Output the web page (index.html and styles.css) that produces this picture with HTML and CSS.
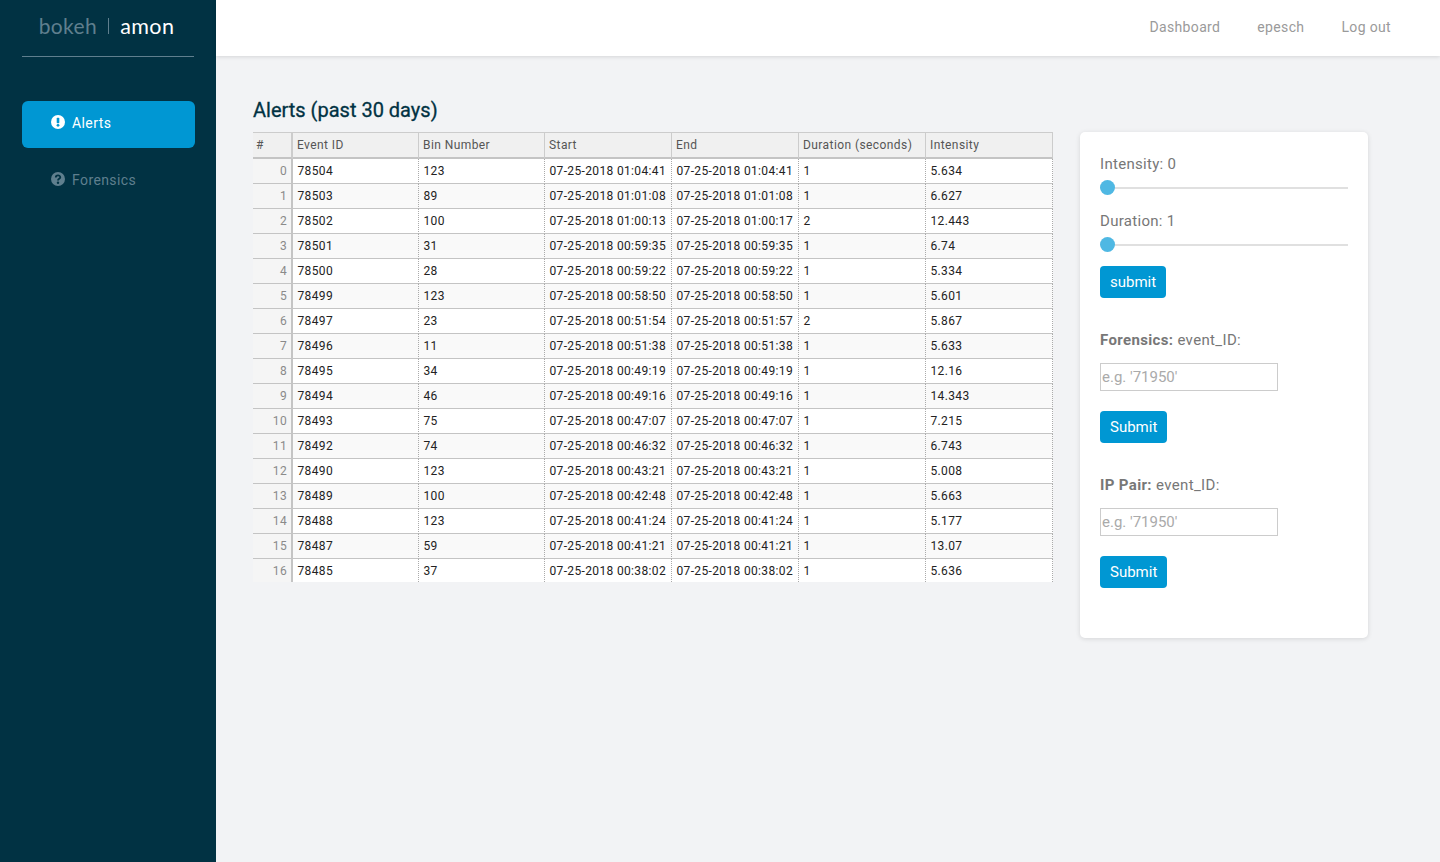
FILE: index.html
```html
<!DOCTYPE html>
<html lang="en">
<head>
    <meta charset="UTF-8">
    <title>amon</title>
    <link rel="stylesheet" href="styles.css">
</head>
<body>
    <div class="sidebar">
        <div class="logo"><span class="logo-dim">bokeh</span><span class="logo-sep"></span><span class="logo-name">amon</span></div>
        <ul class="nav">
            <li class="nav-item active">
                <svg class="nav-icon" viewBox="0 0 14 14"><circle cx="7" cy="7" r="7" fill="#fff"/><rect x="5.7" y="2.8" width="2.6" height="5.4" rx="0.8" fill="#0097d3"/><circle cx="7" cy="10.3" r="1.4" fill="#0097d3"/></svg>
                Alerts
            </li>
            <li class="nav-item">
                <svg class="nav-icon" viewBox="0 0 14 14"><circle cx="7" cy="7" r="7" fill="#5f7f8e"/><path d="M4.8 5.4 C4.8 2.8 9.3 2.8 9.3 5.3 C9.3 6.9 7 6.8 7 8.4" fill="none" stroke="#013243" stroke-width="1.8"/><circle cx="7" cy="10.7" r="1.2" fill="#013243"/></svg>
                Forensics
            </li>
        </ul>
    </div>
    <div class="page">
        <div class="topbar">
            <a class="top-link">Dashboard</a>
            <a class="top-link">epesch</a>
            <a class="top-link">Log out</a>
        </div>
        <div class="content">
            <div class="main">
                <h1>Alerts (past 30 days)</h1>
                <table class="grid">
                    <colgroup>
                        <col class="c-index"><col class="c-id"><col class="c-bin"><col class="c-start"><col class="c-end"><col class="c-dur"><col class="c-int">
                    </colgroup>
                    <thead>
                        <tr><th>#</th><th>Event ID</th><th>Bin Number</th><th>Start</th><th>End</th><th>Duration (seconds)</th><th>Intensity</th></tr>
                    </thead>
                    <tbody>
                        <tr><td class="idx">0</td><td>78504</td><td>123</td><td>07-25-2018 01:04:41</td><td>07-25-2018 01:04:41</td><td>1</td><td>5.634</td></tr>
                        <tr><td class="idx">1</td><td>78503</td><td>89</td><td>07-25-2018 01:01:08</td><td>07-25-2018 01:01:08</td><td>1</td><td>6.627</td></tr>
                        <tr><td class="idx">2</td><td>78502</td><td>100</td><td>07-25-2018 01:00:13</td><td>07-25-2018 01:00:17</td><td>2</td><td>12.443</td></tr>
                        <tr><td class="idx">3</td><td>78501</td><td>31</td><td>07-25-2018 00:59:35</td><td>07-25-2018 00:59:35</td><td>1</td><td>6.74</td></tr>
                        <tr><td class="idx">4</td><td>78500</td><td>28</td><td>07-25-2018 00:59:22</td><td>07-25-2018 00:59:22</td><td>1</td><td>5.334</td></tr>
                        <tr><td class="idx">5</td><td>78499</td><td>123</td><td>07-25-2018 00:58:50</td><td>07-25-2018 00:58:50</td><td>1</td><td>5.601</td></tr>
                        <tr><td class="idx">6</td><td>78497</td><td>23</td><td>07-25-2018 00:51:54</td><td>07-25-2018 00:51:57</td><td>2</td><td>5.867</td></tr>
                        <tr><td class="idx">7</td><td>78496</td><td>11</td><td>07-25-2018 00:51:38</td><td>07-25-2018 00:51:38</td><td>1</td><td>5.633</td></tr>
                        <tr><td class="idx">8</td><td>78495</td><td>34</td><td>07-25-2018 00:49:19</td><td>07-25-2018 00:49:19</td><td>1</td><td>12.16</td></tr>
                        <tr><td class="idx">9</td><td>78494</td><td>46</td><td>07-25-2018 00:49:16</td><td>07-25-2018 00:49:16</td><td>1</td><td>14.343</td></tr>
                        <tr><td class="idx">10</td><td>78493</td><td>75</td><td>07-25-2018 00:47:07</td><td>07-25-2018 00:47:07</td><td>1</td><td>7.215</td></tr>
                        <tr><td class="idx">11</td><td>78492</td><td>74</td><td>07-25-2018 00:46:32</td><td>07-25-2018 00:46:32</td><td>1</td><td>6.743</td></tr>
                        <tr><td class="idx">12</td><td>78490</td><td>123</td><td>07-25-2018 00:43:21</td><td>07-25-2018 00:43:21</td><td>1</td><td>5.008</td></tr>
                        <tr><td class="idx">13</td><td>78489</td><td>100</td><td>07-25-2018 00:42:48</td><td>07-25-2018 00:42:48</td><td>1</td><td>5.663</td></tr>
                        <tr><td class="idx">14</td><td>78488</td><td>123</td><td>07-25-2018 00:41:24</td><td>07-25-2018 00:41:24</td><td>1</td><td>5.177</td></tr>
                        <tr><td class="idx">15</td><td>78487</td><td>59</td><td>07-25-2018 00:41:21</td><td>07-25-2018 00:41:21</td><td>1</td><td>13.07</td></tr>
                        <tr><td class="idx">16</td><td>78485</td><td>37</td><td>07-25-2018 00:38:02</td><td>07-25-2018 00:38:02</td><td>1</td><td>5.636</td></tr>
                    </tbody>
                </table>
            </div>
            <div class="card">
                <div class="slider-label">Intensity: 0</div>
                <input class="slider" type="range" min="0" max="20" value="0">
                <div class="slider-label second">Duration: 1</div>
                <input class="slider" type="range" min="1" max="20" value="1">
                <button class="btn btn-first">submit</button>
                <div class="field-label"><b>Forensics:</b> event_ID:</div>
                <input class="text-input" type="text" placeholder="e.g. '71950'">
                <button class="btn">Submit</button>
                <div class="field-label"><b>IP Pair:</b> event_ID:</div>
                <input class="text-input" type="text" placeholder="e.g. '71950'">
                <button class="btn">Submit</button>
            </div>
        </div>
    </div>
</body>
</html>
```

FILE: styles.css
```css
* {
    margin: 0;
    padding: 0;
    box-sizing: border-box;
    list-style: none;
}
html, body {
    height: 100%;
}
body {
    display: flex;
    height: 862px;
    overflow: hidden;
    background: #f2f3f5;
    font-family: Roboto, "Liberation Sans", sans-serif;
    color: #777;
}

/* sidebar */
.sidebar {
    width: 216px;
    flex-shrink: 0;
    background: #013243;
    padding: 0 21px 0 22px;
}
.logo {
    height: 57px;
    margin-right: 1px;
    border-bottom: 1px solid #5f7f8e;
    display: flex;
    align-items: center;
    justify-content: center;
    padding: 0 3px 5px 0;
    font-family: Lato, sans-serif;
    font-size: 21px;
    letter-spacing: 0.4px;
}
.logo-dim {
    color: #5f7f8e;
}
.logo-sep {
    width: 1px;
    height: 16px;
    margin: 0 11px;
    background: #5f7f8e;
}
.logo-name {
    color: #fff;
    font-size: 21.5px;
}
.nav {
    margin-top: 44px;
}
.nav-item {
    height: 47px;
    margin-bottom: 10px;
    padding: 0 0 4px 29px;
    display: flex;
    align-items: center;
    gap: 7px;
    border-radius: 6px;
    font-size: 14px;
    letter-spacing: 0.4px;
    color: #5f7f8e;
}
.nav-item.active {
    background: #0097d3;
    color: #fff;
}
.nav-icon {
    width: 14px;
    height: 14px;
    margin-top: -1px;
}

/* top bar */
.page {
    flex: 1;
    display: flex;
    flex-direction: column;
    min-width: 0;
}
.topbar {
    height: 56px;
    flex-shrink: 0;
    background: #fff;
    box-shadow: 0 1px 4px rgba(0, 0, 0, 0.12);
    display: flex;
    justify-content: flex-end;
    align-items: center;
    gap: 37px;
    padding: 0 49px 2px 0;
}
.top-link {
    font-size: 14px;
    letter-spacing: 0.35px;
    color: #9a9a9a;
}

/* content */
.content {
    display: flex;
    align-items: flex-start;
    padding: 42px 0 0 37px;
    gap: 27px;
}
.main {
    width: 800px;
}
h1 {
    height: 34px;
    font-size: 20px;
    line-height: 24px;
    font-weight: 400;
    color: #013243;
    -webkit-text-stroke: 0.3px #013243;
}

/* table */
.grid {
    width: 800px;
    table-layout: fixed;
    border-collapse: separate;
    border-spacing: 0;
    font-size: 12px;
    color: #222;
}
.c-index { width: 40px; }
.c-id { width: 126px; }
.c-bin { width: 126px; }
.c-start { width: 127px; }
.c-end { width: 127px; }
.c-dur { width: 127px; }
.c-int { width: 127px; }
.grid th {
    height: 27px;
    background: #f0f0f0;
    border-top: 1px solid #ccc;
    border-bottom: 2px solid #c4c4c4;
    border-right: 1px solid #ccc;
    padding: 0 0 0 4px;
    text-align: left;
    font-weight: 400;
    color: #555;
    letter-spacing: 0.42px;
}
.grid th:first-child {
    border-right-width: 2px;
    padding-left: 3px;
}
.grid td {
    height: 25px;
    border-bottom: 1px solid #c4c4c4;
    border-right: 1px dotted #aaa;
    padding: 0 0 0 4.5px;
    white-space: nowrap;
    overflow: hidden;
    letter-spacing: 0.35px;
}
.grid tbody tr:nth-child(odd) td {
    background: #fff;
}
.grid tbody tr:nth-child(even) td {
    background: #f9f9f9;
}
.grid tbody tr td.idx {
    background: #f5f5f5;
    border-right: 2px solid #c4c4c4;
    padding: 0 4px 0 0;
    text-align: right;
    color: #8a8a8a;
}
.grid tbody tr:last-child td {
    border-bottom: 0;
    height: 23px;
}

/* right card */
.card {
    width: 288px;
    height: 506px;
    margin-top: 34px;
    padding: 22px 20px 0;
    background: #fff;
    border-radius: 5px;
    box-shadow: 0 1px 5px rgba(0, 0, 0, 0.12);
    display: flex;
    flex-direction: column;
    align-items: flex-start;
    font-size: 15px;
}
.slider-label {
    height: 20px;
    line-height: 20px;
    letter-spacing: 0.3px;
}
.slider-label.second {
    margin-top: 16px;
}
.slider {
    -webkit-appearance: none;
    appearance: none;
    width: 248px;
    height: 15px;
    margin: 6px 0 0;
    background: transparent;
    display: block;
}
.slider::-webkit-slider-runnable-track {
    height: 2px;
    background: #e0e0e0;
}
.slider::-webkit-slider-thumb {
    -webkit-appearance: none;
    width: 15px;
    height: 15px;
    margin-top: -6.5px;
    border-radius: 50%;
    background: #4fb8e3;
}
.btn {
    height: 32px;
    padding: 0 10px;
    border: 0;
    border-radius: 4px;
    background: #0097d3;
    color: #fff;
    font-family: Roboto, sans-serif;
    font-size: 15px;
}
.btn-first {
    margin-top: 14px;
}
.field-label {
    height: 20px;
    line-height: 20px;
    margin-top: 32px;
    letter-spacing: 0.35px;
}
.text-input {
    width: 178px;
    height: 28px;
    margin: 13px 0 20px;
    padding: 0 1px;
    border: 1px solid #ccc;
    outline: 0;
    font-family: Roboto, sans-serif;
    font-size: 15px;
}
.text-input::placeholder {
    color: #aaa;
    opacity: 1;
}
```
